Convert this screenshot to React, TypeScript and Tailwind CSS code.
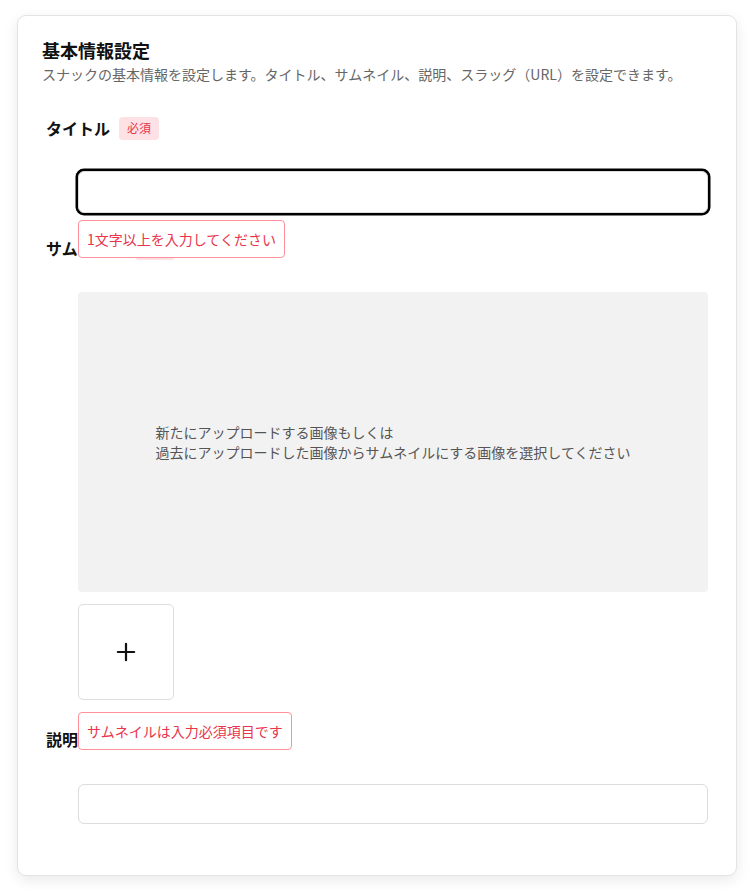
import React from "react";

function Badge() {
  return (
    <span className="inline-flex h-[23px] items-center rounded-[4px] bg-[#fde1e4] px-2 text-[12px] leading-none text-[#e8354c]">
      必須
    </span>
  );
}

function ErrorTip({ children, className }: { children: React.ReactNode; className: string }) {
  return (
    <div
      className={
        "absolute z-10 whitespace-nowrap rounded-[4px] border border-[#ff8f99] bg-white px-[8px] py-[8px] text-[14px] leading-[20px] text-[#e8354c] " +
        className
      }
    >
      {children}
    </div>
  );
}

export default function App() {
  return (
    <div className="min-h-[894px] bg-white font-['Noto_Sans_CJK_JP','Noto_Sans',sans-serif] text-[#111]">
      <div className="ml-[17px] mt-[15px] w-[720px] rounded-[9px] border border-[#e3e3e3] bg-white px-6 pb-[51px] pt-5 shadow-[0_4px_14px_rgba(0,0,0,0.09)]">
        <h2 className="text-[18px] font-bold leading-[28px]">基本情報設定</h2>
        <p className="text-[14px] leading-[20px] text-[#666]">
          スナックの基本情報を設定します。タイトル、サムネイル、説明、スラッグ（URL）を設定できます。
        </p>

        {/* Title */}
        <div className="relative mt-8">
          <div className="flex h-6 items-center gap-[9px] pl-1">
            <span className="text-[16px] font-bold leading-6">タイトル</span>
            <Badge />
          </div>
          <div className="ml-9 mt-[31px] h-[42px] w-[630px] rounded-[6px] border border-[#dcdcdc] bg-white shadow-[0_0_0_2.5px_#000]" />
          <ErrorTip className="left-9 top-[104px]">1文字以上を入力してください</ErrorTip>
        </div>

        {/* Thumbnail */}
        <div className="relative mt-[23px]">
          <div className="flex h-6 items-center gap-[9px] pl-1">
            <span className="text-[16px] font-bold leading-6">サムネイル</span>
            <Badge />
          </div>
          <div className="ml-9 mt-8 flex h-[300px] w-[630px] items-center justify-center rounded-[4px] bg-[#f2f2f2]">
            <div className="text-left text-[14px] leading-[20px] text-[#555]">
              新たにアップロードする画像もしくは
              <br />
              過去にアップロードした画像からサムネイルにする画像を選択してください
            </div>
          </div>
          <div className="ml-9 mt-3 flex h-[96px] w-[96px] items-center justify-center rounded-[5px] border border-[#dedede] bg-white">
            <svg width="28" height="28" viewBox="0 0 24 24" fill="none" stroke="#111" strokeWidth="1.9" strokeLinecap="round">
              <path d="M5 12h14" />
              <path d="M12 5v14" />
            </svg>
          </div>
          <ErrorTip className="left-9 top-[476px]">サムネイルは入力必須項目です</ErrorTip>
        </div>

        {/* Description */}
        <div className="relative mt-[27px]">
          <div className="flex h-6 items-center gap-[9px] pl-1">
            <span className="text-[16px] font-bold leading-6">説明</span>
          </div>
          <div className="ml-9 mt-[33px] h-[40px] w-[630px] rounded-[6px] border border-[#dcdcdc] bg-white" />
        </div>
      </div>
    </div>
  );
}
